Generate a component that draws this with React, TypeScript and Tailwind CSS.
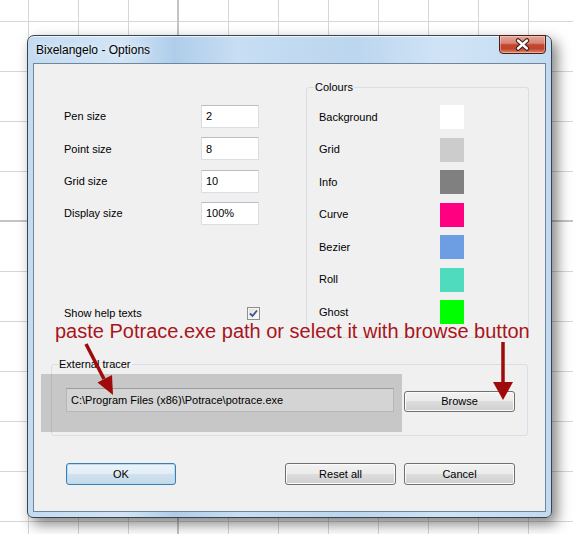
import type { FC } from "react";

const sizes = [
  { label: "Pen size", value: "2" },
  { label: "Point size", value: "8" },
  { label: "Grid size", value: "10" },
  { label: "Display size", value: "100%" },
];

const colours = [
  { label: "Background", swatch: "bg-[#ffffff]" },
  { label: "Grid", swatch: "bg-[#cccccc]" },
  { label: "Info", swatch: "bg-[#808080]" },
  { label: "Curve", swatch: "bg-[#ff0080]" },
  { label: "Bezier", swatch: "bg-[#6d9ee3]" },
  { label: "Roll", swatch: "bg-[#4fdcbe]" },
  { label: "Ghost", swatch: "bg-[#00ff00]" },
];

const btn =
  "flex items-center justify-center rounded-[3px] border border-[#707070] bg-[linear-gradient(to_bottom,#f2f2f2_0%,#ebebeb_50%,#dddddd_50%,#cfcfcf_100%)] shadow-[inset_0_0_0_1px_#fbfbfb]";

const input =
  "flex items-center bg-white border border-[#dadde2] border-t-[#b9bdc4] px-[4px]";

const Button: FC<{ label: string; className?: string }> = ({ label, className }) => (
  <div className={`${btn} ${className ?? ""}`}>{label}</div>
);

const App: FC = () => {
  return (
    <div className="relative w-[573px] h-[534px] overflow-hidden bg-white pt-[35px] pl-[27px] font-['Liberation_Sans',Arial,sans-serif] text-[11px] text-black bg-[linear-gradient(to_right,#d6d6d6_1px,transparent_1px),linear-gradient(to_bottom,#d6d6d6_1px,transparent_1px)] bg-[size:50px_50px] bg-[position:28px_21px]">
      {/* spreadsheet behind the dialog */}
      <div className="absolute top-0 left-[177px] w-[2px] h-full bg-[#c4c4c4]" />
      <div className="absolute left-0 top-[220px] h-[2px] w-full bg-[#c4c4c4]" />

      {/* window */}
      <div className="relative w-[525px] h-[483px] rounded-t-[7px] rounded-b-[6px] border border-[#39444f] bg-[linear-gradient(to_right,#c3dbf1_0%,#d2e5f6_18%,#afcdea_28%,#c7def3_40%,#bcd6ef_62%,#d0e4f6_80%,#c2daf1_100%)] shadow-[inset_0_1px_0_rgba(255,255,255,0.7),5px_6px_14px_rgba(0,0,0,0.5)]">
        <div className="h-[27px] pl-[8px] flex items-center text-[12px] [text-shadow:0_0_6px_#fff]">
          Bixelangelo - Options
        </div>

        <div className="absolute -top-[1px] right-[5px] w-[47px] h-[19px] rounded-b-[4px] border border-[#4e1b14] bg-[linear-gradient(to_bottom,#e6a598_0%,#d88575_42%,#c4462f_52%,#c0442c_75%,#dc8a6f_100%)] shadow-[inset_0_0_0_1px_rgba(255,255,255,0.35)]">
          <svg width="45" height="17" viewBox="0 0 45 17">
            <path d="M18 4.5 L27 12.5 M27 4.5 L18 12.5" stroke="#3b1a14" strokeWidth="4.5" strokeLinecap="round" />
            <path d="M18 4.5 L27 12.5 M27 4.5 L18 12.5" stroke="#ffffff" strokeWidth="2.4" strokeLinecap="round" />
          </svg>
        </div>

        {/* client area */}
        <div className="mx-[5px] h-[449px] border border-[#71869b] bg-[#f0f0f0]">
          <div className="flex pt-[23px]">
            <div className="w-[272px] h-[251px] pl-[30px] pt-[18px] flex flex-col">
              <div className="flex flex-col gap-[9.4px]">
                {sizes.map(({ label, value }) => (
                  <div key={label} className="flex items-center h-[23px]">
                    <div className="w-[137px]">{label}</div>
                    <div className={`${input} w-[58px] h-[23px]`}>{value}</div>
                  </div>
                ))}
              </div>
              <div className="mt-auto mb-[18px] flex items-center h-[14px]">
                <div className="w-[183px]">Show help texts</div>
                <div className="w-[13px] h-[13px] border border-[#8e8f8f] bg-[linear-gradient(to_bottom_right,#dcdcdc,#ffffff)] shadow-[inset_0_0_0_1px_#f4f4f4]">
                  <svg width="11" height="11" viewBox="0 0 11 11">
                    <path d="M2 5.5 L4.5 8 L9 2.5" fill="none" stroke="#41558a" strokeWidth="1.8" />
                  </svg>
                </div>
              </div>
            </div>

            <div className="relative w-[223px] h-[251px] rounded-[3px] border border-[#d5dfe5] pt-[17px] pl-[12px]">
              <div className="absolute -top-[7px] left-[7px] px-[1px] bg-[#f0f0f0] leading-[13px]">Colours</div>
              <div className="flex flex-col gap-[8.5px]">
                {colours.map(({ label, swatch }) => (
                  <div key={label} className="flex items-center h-[24px]">
                    <div className="w-[121px]">{label}</div>
                    <div className={`w-[24px] h-[24px] ${swatch}`} />
                  </div>
                ))}
              </div>
            </div>
          </div>

          <div className="relative mt-[26px] ml-[17px] w-[477px] h-[72px] rounded-[3px] border border-[#d5dfe5] pl-[14px] pt-[23px] flex items-start">
            <div className="absolute -top-[7px] left-[6px] px-[1px] bg-[#f0f0f0] leading-[13px]">External tracer</div>
            <div className={`${input} w-[328px] h-[24px] border-[#d3d6da]`}>C:\Program Files (x86)\Potrace\potrace.exe</div>
            <Button label="Browse" className="ml-[10px] mt-[3px] w-[111px] h-[21px]" />
          </div>

          <div className="mt-[27px] flex pl-[32px] pr-[30px]">
            <div className="flex items-center justify-center w-[110px] h-[22px] rounded-[3px] border border-[#3c7fb1] bg-[linear-gradient(to_bottom,#eaf3f9_0%,#e2edf5_50%,#d1e2ee_50%,#c5d9e8_100%)] shadow-[inset_0_0_0_1px_#b6dcf5]">
              OK
            </div>
            <Button label="Reset all" className="ml-auto w-[111px] h-[22px]" />
            <Button label="Cancel" className="ml-[8px] w-[111px] h-[22px]" />
          </div>
        </div>
      </div>

      {/* annotation overlays */}
      <div className="absolute left-[41px] top-[374px] w-[361px] h-[58px] bg-black/[0.17]" />
      <div className="absolute left-[55px] top-[321px] text-[20px] leading-[20px] whitespace-nowrap text-[#aa141b]">
        paste Potrace.exe path or select it with browse button
      </div>
      <svg className="absolute inset-0 pointer-events-none" width="573" height="534" viewBox="0 0 573 534">
        <path d="M86 344 L104 379" stroke="#a00a0a" strokeWidth="3.5" />
        <polygon points="113,395 112,375 97.5,382.5" fill="#a00a0a" />
        <path d="M503 342 L503 384" stroke="#a00a0a" strokeWidth="3.5" />
        <polygon points="493,382 513,382 503,400" fill="#a00a0a" />
      </svg>
    </div>
  );
};

export default App;
